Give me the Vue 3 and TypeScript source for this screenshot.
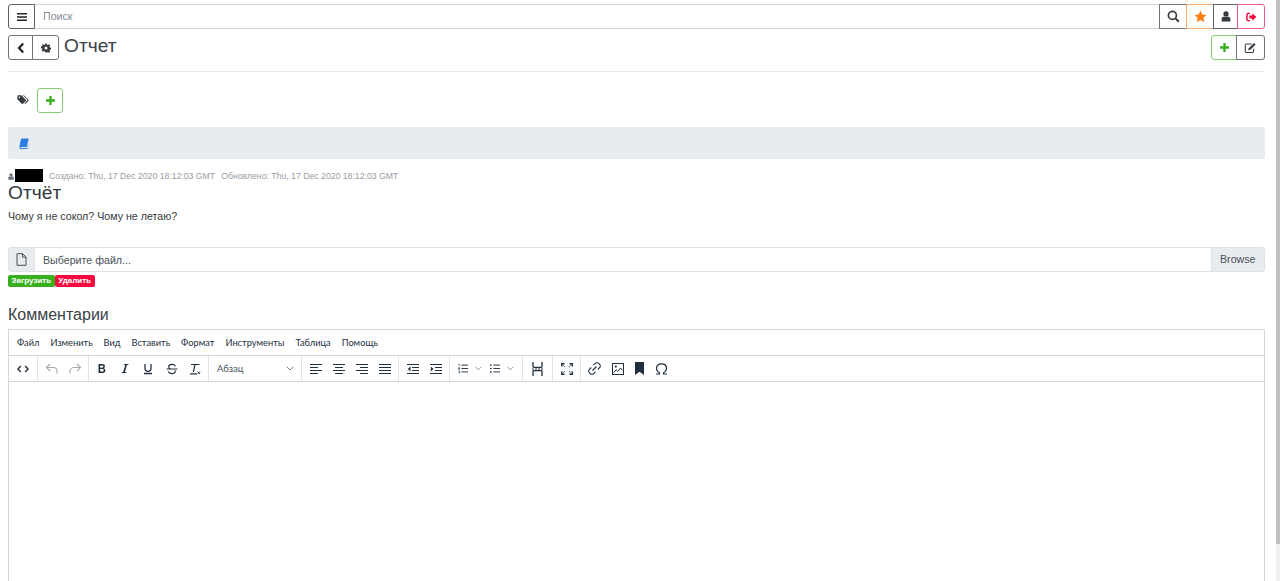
<script setup lang="ts">
const menus: string[] = ['Файл', 'Изменить', 'Вид', 'Вставить', 'Формат', 'Инструменты', 'Таблица', 'Помощь']
</script>

<template>
  <div class="page">
    <header class="topbar">
      <button class="btn menu-btn" aria-label="menu">
        <svg width="12" height="12" viewBox="0 0 12 12"><path d="M1 2h10v1.6H1zM1 5.2h10v1.6H1zM1 8.4h10V10H1z" fill="#212529"/></svg>
      </button>
      <div class="search">Поиск</div>
      <div class="top-actions">
        <button class="btn tb gray" aria-label="search">
          <svg width="13" height="13" viewBox="0 0 13 13"><circle cx="5.4" cy="5.4" r="4" fill="none" stroke="#343a40" stroke-width="1.7"/><path d="M8.400 8.400l3.400 3.400" stroke="#343a40" stroke-width="2"/></svg>
        </button>
        <button class="btn tb orange" aria-label="favourite">
          <svg width="13" height="13" viewBox="0 0 13 13"><path d="M6.500.6l1.800 3.800 4.100.5-3 2.900.8 4.100-3.700-2-3.700 2 .8-4.100-3-2.900 4.100-.5z" fill="#fd7e14"/></svg>
        </button>
        <button class="btn tb dark" aria-label="user">
          <svg width="10" height="11" viewBox="0 0 11 12"><circle cx="5.500" cy="3.200" r="2.900" fill="#343a40"/><path d="M.7 11.500V8.600c0-1.500 1-2.400 2.200-2.400h5.200c1.200 0 2.200.9 2.200 2.400v2.900z" fill="#343a40"/></svg>
        </button>
        <button class="btn tb red" aria-label="logout">
          <svg width="11" height="10" viewBox="0 0 12 11"><path d="M4.400 1.500H2.200c-.8 0-1.200.5-1.200 1.200v5.600c0 .7.4 1.200 1.200 1.200h2.200" fill="none" stroke="#f5093f" stroke-width="1.600"/><path d="M3.600 3.900h3.200V1.500l4.600 4-4.600 4V7.100H3.600z" fill="#f5093f"/></svg>
        </button>
      </div>
    </header>

    <section class="title-row">
      <div class="group">
        <button class="btn sq dark-b" aria-label="back">
          <svg width="10" height="12" viewBox="0 0 10 12"><path d="M7.200 1.600L3 6l4.200 4.400" fill="none" stroke="#212529" stroke-width="2.200"/></svg>
        </button>
        <button class="btn sq dark-b joined" aria-label="settings">
          <svg width="10" height="10" viewBox="0 0 12 12"><path fill-rule="evenodd" fill="#343a40" d="M5 .5h2l.3 1.600 1 .4L9.700 1.600l1.400 1.400-.9 1.400.4 1 1.600.3v2l-1.600.3-.4 1 .9 1.400-1.400 1.400-1.400-.9-1 .4L7 11.500H5l-.3-1.600-1-.4-1.400.9L.9 9l.9-1.400-.4-1L-.2 6.300v-2l1.600-.3.4-1-.9-1.400L2.300 1.600l1.400.9 1-.4zM6 4.200a1.800 1.800 0 1 0 0 3.600 1.800 1.800 0 0 0 0-3.600z"/></svg>
        </button>
      </div>
      <h1 class="title">Отчет</h1>
      <div class="title-actions">
        <button class="btn sq green" aria-label="add">
          <svg width="9" height="9" viewBox="0 0 10 10"><path d="M3.700 0h2.600v3.700H10v2.600H6.300V10H3.700V6.300H0V3.700h3.700z" fill="#38b01e"/></svg>
        </button>
        <button class="btn sq dark-b joined" aria-label="edit">
          <svg width="13" height="11" viewBox="0 0 12 10.500"><path d="M9 6.500v2.300c0 .7-.5 1.200-1.200 1.200H2.200C1.500 10 1 9.500 1 8.800V3.200C1 2.500 1.500 2 2.200 2H7" fill="none" stroke="#343a40" stroke-width="1"/><path d="M4.300 5.900L9.300.9l1.600 1.600-5 5-2 .4z" fill="#343a40"/></svg>
        </button>
      </div>
    </section>

    <hr class="rule" />

    <section class="tags">
      <svg class="tag-icon" width="12" height="10" viewBox="0 0 13 11"><path d="M.3 1.300C.3.700.7.300 1.300.300h3.400l4.800 4.800c.4.400.4 1 0 1.400L6.500 9.500c-.4.400-1 .4-1.400 0L.3 4.700z" fill="#343a40"/><path d="M6.300.300h1.200l4.900 4.900c.4.400.4 1 0 1.400L9 10l-.8-.8 3-3.200c.2-.2.200-.6 0-.8z" fill="#343a40"/><circle cx="2.500" cy="2.500" r=".9" fill="#fff"/></svg>
      <button class="btn add-tag" aria-label="add tag">
        <svg width="9" height="9" viewBox="0 0 10 10"><path d="M3.700 0h2.600v3.700H10v2.600H6.300V10H3.700V6.300H0V3.700h3.700z" fill="#38b01e"/></svg>
      </button>
    </section>

    <section class="crumb">
      <svg width="10" height="11" viewBox="0 0 10 11"><path d="M2.600.500h6.600c.4 0 .6.300.5.700L7.800 8.400c-.1.400-.4.600-.8.600H1.800c-.5 0-.6.400-.5.600.1.300.3.400.6.400h6.300l.9-3.500.4.300-1 3.800c-.1.200-.2.300-.4.300H1.700C.8 10.900.2 10 .4 9L1.900 1.200c.1-.4.300-.7.700-.7z" fill="#2a7fe0"/></svg>
    </section>

    <section class="meta">
      <svg width="6" height="7" viewBox="0 0 11 12"><circle cx="5.500" cy="3.200" r="3" fill="#6c757d"/><path d="M.5 12V8.600c0-1.500 1-2.400 2.400-2.400h5.200c1.400 0 2.400.9 2.400 2.400V12z" fill="#6c757d"/></svg>
      <span class="redact"></span>
      <span class="stamp first">Создано: Thu, 17 Dec 2020 18:12:03 GMT</span>
      <span class="stamp second">Обновлено: Thu, 17 Dec 2020 18:12:03 GMT</span>
    </section>

    <h2 class="post-title">Отчёт</h2>
    <p class="post-text">Чому я не сокол? Чому не летаю?</p>

    <section class="file">
      <span class="file-icon">
        <svg width="11" height="13" viewBox="0 0 11 13"><path d="M1 .700h5.700L10 4v8.300H1zM6.500.700V4.200H10" fill="none" stroke="#495057" stroke-width="1"/></svg>
      </span>
      <span class="file-label">Выберите файл...</span>
      <span class="browse">Browse</span>
    </section>
    <div class="badges">
      <span class="badge ok">Загрузить</span>
      <span class="badge bad">Удалить</span>
    </div>

    <h3 class="comments">Комментарии</h3>

    <section class="editor">
      <nav class="ed-menu">
        <span v-for="m in menus" :key="m">{{ m }}</span>
      </nav>
      <div class="ed-tools">
        <div class="tg g-code">
          <svg width="12" height="8" viewBox="0 0 12 8"><path d="M3.800 1L1 4l2.800 3M8.200 1L11 4 8.200 7" fill="none" stroke="#222f3e" stroke-width="1.400"/></svg>
        </div>
        <div class="tg g-hist">
          <svg width="14" height="12" viewBox="0 0 14 12"><path d="M5 1L1.500 4.500 5 8M1.500 4.500H8c2.500 0 4 1.600 4 3.500v2.500" fill="none" stroke="#a6abb2" stroke-width="1.100"/></svg>
          <svg width="14" height="12" viewBox="0 0 14 12"><path d="M9 1l3.500 3.500L9 8M12.500 4.500H6C3.500 4.500 2 6.100 2 8v2.500" fill="none" stroke="#a6abb2" stroke-width="1.100"/></svg>
        </div>
        <div class="tg g-fmt">
          <svg width="10" height="11" viewBox="0 0 10 11"><path d="M1.500 1h4c1.500 0 2.400.8 2.400 2.200 0 1-.5 1.700-1.400 2 1.200.2 1.900 1 1.900 2.300 0 1.500-1 2.500-2.600 2.500H1.500zM3.200 2.400v2.300h2c.7 0 1.100-.5 1.100-1.100 0-.8-.4-1.200-1.200-1.200zm0 3.700v2.500h2.300c.8 0 1.200-.5 1.200-1.300s-.5-1.200-1.300-1.200z" fill="#222f3e"/></svg>
          <svg width="10" height="11" viewBox="0 0 10 11"><path d="M3.800 1h4.700v.7L7 1.900 4.900 9.100l1.500.2v.7H1.700v-.7l1.500-.2L5.300 1.900l-1.500-.2z" fill="#222f3e"/></svg>
          <svg width="10" height="12" viewBox="0 0 10 12"><path d="M2 1v4.500C2 7.300 3.300 8.300 5 8.300s3-1 3-2.800V1M1 10.500h8" fill="none" stroke="#222f3e" stroke-width="1.300"/></svg>
          <svg width="12" height="12" viewBox="0 0 12 12"><path d="M9.500 3.200C9 2 7.800 1.400 6 1.400c-2 0-3.300.9-3.300 2.300 0 .9.500 1.600 1.500 2M8.800 7.300c.3.400.4.800.4 1.100 0 1.300-1.300 2.200-3.200 2.200-2 0-3.200-.8-3.600-2.100M.5 6h11" fill="none" stroke="#222f3e" stroke-width="1.100"/></svg>
          <svg class="clear" width="12" height="12" viewBox="0 0 12 12"><path d="M2 1.500h8.500M6 1.500L4.300 9M1 10.900h7" fill="none" stroke="#222f3e" stroke-width="1.200"/><path d="M8.500 8.500l2.500 2.500M11 8.500L8.500 11" stroke="#222f3e" stroke-width=".9"/></svg>
        </div>
        <div class="tg g-select">
          <span>Абзац</span>
          <svg width="8" height="5" viewBox="0 0 8 5"><path d="M.7.700L4 4 7.300.7" fill="none" stroke="#7c848d" stroke-width="1"/></svg>
        </div>
        <div class="tg g-align">
          <svg width="12" height="10" viewBox="0 0 12 10"><path d="M0 .5h12M0 3.500h8M0 6.500h12M0 9.500h8" stroke="#222f3e"/></svg>
          <svg width="12" height="10" viewBox="0 0 12 10"><path d="M0 .5h12M2 3.500h8M0 6.500h12M2 9.500h8" stroke="#222f3e"/></svg>
          <svg width="12" height="10" viewBox="0 0 12 10"><path d="M0 .5h12M4 3.500h8M0 6.500h12M4 9.500h8" stroke="#222f3e"/></svg>
          <svg width="12" height="10" viewBox="0 0 12 10"><path d="M0 .5h12M0 3.500h12M0 6.500h12M0 9.500h12" stroke="#222f3e"/></svg>
        </div>
        <div class="tg g-indent">
          <svg width="12" height="10" viewBox="0 0 12 10"><path d="M0 .5h12M5 3.500h7M5 6.500h7M0 9.500h12" stroke="#222f3e"/><path d="M3.500 2.500L.8 5l2.700 2.500z" fill="#222f3e"/></svg>
          <svg width="12" height="10" viewBox="0 0 12 10"><path d="M0 .5h12M5 3.500h7M5 6.500h7M0 9.500h12" stroke="#222f3e"/><path d="M.8 2.500L3.500 5 .8 7.500z" fill="#222f3e"/></svg>
        </div>
        <div class="tg g-lists">
          <svg width="12" height="11" viewBox="0 0 12 11"><path d="M4 1.500h8M4 5.500h8M4 9.500h8" stroke="#222f3e" stroke-width="1.100"/><path d="M.5.500h1v2M.5 4.500h1.500v1H.5v1H2M.5 8.500H2v2H.5" fill="none" stroke="#222f3e" stroke-width=".8"/></svg>
          <svg class="chev" width="8" height="5" viewBox="0 0 8 5"><path d="M.7.700L4 4 7.300.7" fill="none" stroke="#7c848d" stroke-width="1"/></svg>
          <svg width="12" height="11" viewBox="0 0 12 11"><path d="M4 1.500h8M4 5.500h8M4 9.500h8" stroke="#222f3e" stroke-width="1.100"/><circle cx="1" cy="1.500" r="1" fill="#222f3e"/><circle cx="1" cy="5.500" r="1" fill="#222f3e"/><circle cx="1" cy="9.500" r="1" fill="#222f3e"/></svg>
          <svg class="chev" width="8" height="5" viewBox="0 0 8 5"><path d="M.7.700L4 4 7.300.7" fill="none" stroke="#7c848d" stroke-width="1"/></svg>
        </div>
        <div class="tg g-single">
          <svg width="11" height="14" viewBox="0 0 11 14"><path d="M1 0v4.500c0 .5.300.8.800.8h7.400c.5 0 .8-.3.800-.8V0M1 14V9.500c0-.5.300-.8.800-.8h7.400c.5 0 .8.300.8.800V14" fill="none" stroke="#222f3e" stroke-width="1.300"/><path d="M0 7h2M3 7h2M6 7h2M9 7h2" stroke="#222f3e"/></svg>
        </div>
        <div class="tg g-full">
          <svg width="12" height="12" viewBox="0 0 12 12"><path d="M.8 3.500V.8h2.700M8.500.8h2.700v2.700M.8 8.500v2.700h2.700M8.500 11.200h2.700V8.500" fill="none" stroke="#222f3e" stroke-width="1.500"/><path d="M2.500 2.500l1.300 1.300M9.500 2.500L8.200 3.800M2.500 9.500l1.300-1.300M9.500 9.500L8.200 8.200" stroke="#222f3e"/></svg>
        </div>
        <div class="tg g-last">
          <svg width="13" height="13" viewBox="0 0 13 13"><path d="M5.500 3.200l1.800-1.800a2.400 2.400 0 0 1 3.400 0l.9.900a2.400 2.400 0 0 1 0 3.400L9.800 7.500M7.500 9.800l-1.800 1.800a2.400 2.400 0 0 1-3.400 0l-.9-.9a2.400 2.400 0 0 1 0-3.400l1.800-1.800M4.500 8.500l4-4" fill="none" stroke="#222f3e" stroke-width="1.100"/></svg>
          <svg width="12" height="12" viewBox="0 0 12 12"><rect x=".5" y=".5" width="11" height="11" fill="none" stroke="#222f3e"/><path d="M1.500 9.500l2.700-2.700 1.600 1.600 2.700-3.400 2 2.200" fill="none" stroke="#222f3e"/><circle cx="3.800" cy="3.600" r="1.100" fill="#222f3e"/></svg>
          <svg width="9" height="13" viewBox="0 0 9 13"><path d="M0 0h9v13L4.500 9.800 0 13z" fill="#222f3e"/></svg>
          <svg width="13" height="12" viewBox="0 0 13 12"><path d="M1 11h3.500V9.800C2.700 8.800 1.500 7 1.500 5.200 1.500 2.500 3.600.8 6.500.8s5 1.700 5 4.400c0 1.800-1.200 3.600-3 4.600V11H12" fill="none" stroke="#222f3e" stroke-width="1.200"/></svg>
        </div>
      </div>
      <div class="ed-body"></div>
    </section>

    <div class="scrollbar"><div class="thumb"></div></div>
  </div>
</template>

<style scoped>
.page {
  position: relative;
  box-sizing: border-box;
  height: 581px;
  width: 1280px;
  padding: 4px 15px 0 8px;
  overflow: hidden;
  background: #fff;
  color: #343a40;
  font-family: "Liberation Sans", Arial, sans-serif;
}
.btn {
  display: flex;
  align-items: center;
  justify-content: center;
  box-sizing: border-box;
  padding: 0;
  background: #fff;
  border: 1px solid #343a40;
}
.topbar {
  display: flex;
  height: 25px;
}
.menu-btn {
  width: 27px;
  height: 25px;
  border-radius: 3px 0 0 3px;
  border-color: #5a6168;
}
.search {
  flex: 1;
  box-sizing: border-box;
  padding: 0 0 0 8px;
  border-top: 1px solid #ced4da;
  border-bottom: 1px solid #ced4da;
  font-size: 10.670px;
  line-height: 23px;
  color: #868e96;
}
.top-actions { display: flex; }
.tb {
  height: 25px;
  margin-left: -1px;
}
.tb.gray { width: 28px; border-color: #6c757d; border-radius: 0; margin-left: 0; }
.tb.orange { width: 28px; border-color: #fdab6c; border-radius: 0; }
.tb.dark { width: 25px; border-color: #5a6168; border-radius: 0; }
.tb.red { width: 28px; border-color: #e85c84; border-radius: 0 3px 3px 0; }

.title-row {
  display: flex;
  height: 26px;
  margin-top: 6px;
  align-items: flex-start;
}
.group { display: flex; }
.sq { height: 25px; }
.dark-b { width: 25px; border-color: #6c757d; border-radius: 3px 0 0 3px; }
.dark-b.joined { width: 27px; margin-left: -1px; border-radius: 0 3px 3px 0; }
.title {
  margin: -1px 0 0 5px;
  font-size: 19.200px;
  font-weight: 400;
  line-height: 24px;
  color: #3c4248;
}
.title-actions { display: flex; margin-left: auto; }
.green { width: 26px; border-color: #86cc76; border-radius: 3px 0 0 3px; }
.title-actions .joined { width: 29px; }

.rule {
  margin: 10px 0 0;
  border: 0;
  border-top: 1px solid #e7e9eb;
}
.tags {
  display: flex;
  align-items: center;
  height: 26px;
  margin-top: 15px;
  padding-left: 9px;
}
.tag-icon { margin-right: 8px; margin-top: -1px; }
.add-tag {
  width: 26px;
  height: 25px;
  border-color: #86cc76;
  border-radius: 3px;
}
.crumb {
  display: flex;
  align-items: center;
  height: 32px;
  margin-top: 14px;
  padding-left: 11px;
  background: #e9ecef;
  border-radius: 2px;
}
.meta {
  display: flex;
  align-items: center;
  height: 14px;
  margin-top: 9px;
  font-size: 8.700px;
  color: #979da3;
}
.meta svg { margin-top: 3px; }
.redact {
  width: 28px;
  height: 13px;
  margin-left: 1px;
  background: #000;
}
.stamp { margin-top: 2px; }
.stamp.first { margin-left: 6px; }
.stamp.second { margin-left: 6px; }
.post-title {
  margin: 1px 0 0;
  font-size: 19.200px;
  font-weight: 400;
  line-height: 19px;
  color: #343a40;
}
.post-text {
  margin: 7px 0 0;
  font-size: 10.670px;
  line-height: 14px;
  color: #343a40;
}
.file {
  display: flex;
  align-items: center;
  box-sizing: border-box;
  height: 25px;
  margin-top: 24px;
  border: 1px solid #dee2e6;
  border-radius: 3px;
  font-size: 10.670px;
  color: #495057;
}
.file-icon {
  display: flex;
  align-items: center;
  justify-content: center;
  width: 25px;
  height: 100%;
  background: #e9ecef;
  border-right: 1px solid #dee2e6;
}
.file-label { flex: 1; padding-left: 8px; }
.browse {
  width: 44px;
  height: 100%;
  padding-left: 8px;
  line-height: 23px;
  background: #e9ecef;
  border-left: 1px solid #dee2e6;
}
.badges { display: flex; height: 12px; margin-top: 3px; }
.badge {
  padding: 0 3.500px;
  font-size: 8px;
  font-weight: 700;
  line-height: 12px;
  color: #fff;
  border-radius: 2px;
}
.ok { background: #38b01e; }
.bad { background: #f5093f; }
.comments {
  margin: 18px 0 0;
  font-size: 16px;
  font-weight: 400;
  line-height: 20px;
  color: #3c4248;
}
.editor {
  margin-top: 4px;
  height: 260px;
  border: 1px solid #d4d7da;
  border-bottom: 0;
  font-family: Lato, sans-serif;
  color: #222f3e;
}
.ed-menu {
  display: flex;
  gap: 11px;
  align-items: center;
  height: 25px;
  padding-left: 8px;
  font-size: 9.250px;
  border-bottom: 1px solid #d4d7da;
}
.ed-tools {
  display: flex;
  height: 25px;
  border-bottom: 1px solid #d4d7da;
}
.tg {
  display: flex;
  align-items: center;
  box-sizing: border-box;
  height: 100%;
  border-right: 1px solid #e0e2e4;
}
.g-code { width: 29px; justify-content: center; }
.g-hist { width: 51px; padding-left: 7px; gap: 9px; }
.g-fmt { width: 120px; padding-left: 8px; gap: 13px; }
.g-fmt .clear { margin-left: -2px; }
.g-select { width: 93px; padding: 0 7px 0 8px; justify-content: space-between; font-size: 9.500px; color: #4a5562; }
.g-align { width: 97px; padding-left: 8px; gap: 11px; }
.g-indent { width: 51px; padding-left: 8px; gap: 11px; }
.g-lists { width: 73px; padding-left: 8px; }
.g-lists .chev { margin: 0 8px 0 7px; }
.g-single { width: 30px; justify-content: center; }
.g-full { width: 28px; justify-content: center; }
.g-last { border-right: 0; padding-left: 7px; gap: 11px; }
.scrollbar {
  position: absolute;
  top: 0;
  right: 0;
  width: 4px;
  height: 581px;
  background: #f1f1f1;
}
.thumb {
  height: 544px;
  background: #c1c1c1;
}
</style>

<style>
html, body { margin: 0; overflow: hidden; background: #fff; }
</style>
